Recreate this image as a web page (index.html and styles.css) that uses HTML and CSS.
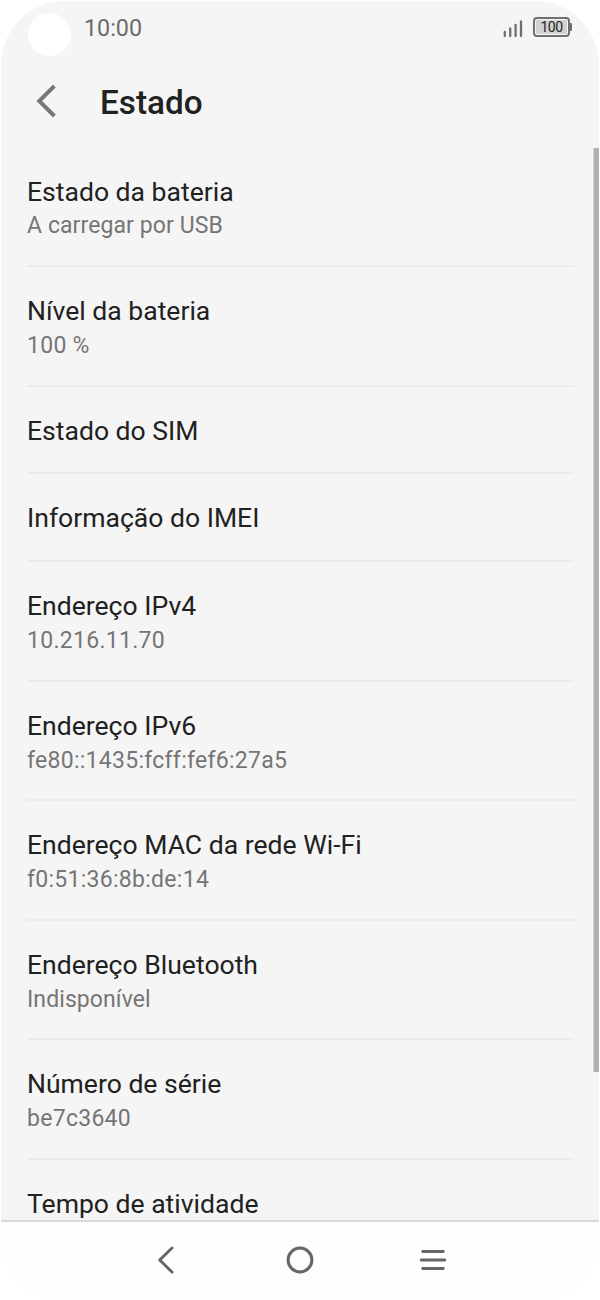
FILE: index.html
```
<!DOCTYPE html>
<html lang="pt">
<head>
<meta charset="utf-8">
<title>Estado</title>
<link rel="stylesheet" href="styles.css">
</head>
<body>
<div class="phone">
  <div class="statusbar">
    <span class="camera"></span>
    <span class="clock">10:00</span>
    <svg class="signal" width="22" height="20" viewBox="0 0 22 20"><path d="M2.8 14v4M8.2 10.5v7.5M13.6 7v11M19 3.3v14.7" stroke="#6f6f6f" stroke-width="2.3" stroke-linecap="round"/></svg>
    <span class="battery"><span class="level">100</span></span>
  </div>
  <header class="header">
    <svg class="back" width="20" height="34" viewBox="0 0 20 34"><path d="M19 2 3.8 17 19 32" transform="translate(-.6 0)" fill="none" stroke="#777" stroke-width="3.9"/></svg>
    <h1 class="heading">Estado</h1>
  </header>
  <main class="list">
    <div class="item"><div class="title">Estado da bateria</div><div class="value">A carregar por USB</div></div>
    <div class="item"><div class="title">Nível da bateria</div><div class="value code">100 %</div></div>
    <div class="item single"><div class="title">Estado do SIM</div></div>
    <div class="item single"><div class="title">Informação do IMEI</div></div>
    <div class="item"><div class="title">Endereço IPv4</div><div class="value code">10.216.11.70</div></div>
    <div class="item"><div class="title">Endereço IPv6</div><div class="value code">fe80::1435:fcff:fef6:27a5</div></div>
    <div class="item"><div class="title">Endereço MAC da rede Wi-Fi</div><div class="value code">f0:51:36:8b:de:14</div></div>
    <div class="item"><div class="title">Endereço Bluetooth</div><div class="value">Indisponível</div></div>
    <div class="item"><div class="title">Número de série</div><div class="value code">be7c3640</div></div>
    <div class="item"><div class="title">Tempo de atividade</div></div>
    <span class="scrollbar"></span>
  </main>
  <nav class="navbar">
    <svg width="30" height="30" viewBox="0 0 30 30"><path d="M21.8 3 9.5 15l12.3 12" transform="translate(-1.8 0)" fill="none" stroke="#666" stroke-width="2.9" stroke-linecap="round" stroke-linejoin="round"/></svg>
    <svg width="30" height="30" viewBox="0 0 30 30"><circle cx="15" cy="15" r="11.9" fill="none" stroke="#666" stroke-width="3"/></svg>
    <svg width="30" height="30" viewBox="0 0 30 30"><path d="M4.7 6.5h20.6M3.2 15h23.6M4.7 23.5h20.6" stroke="#666" stroke-width="2.9" stroke-linecap="round"/></svg>
  </nav>
</div>
</body>
</html>
```
FILE: styles.css
```
body {
  margin: 0;
  background: #fff;
  font-family: Roboto, "Liberation Sans", sans-serif;
  color: #212121;
}
.phone {
  display: flex;
  flex-direction: column;
  box-sizing: border-box;
  width: 598px;
  height: 1299px;
  margin: 0 1px;
  overflow: hidden;
  border-radius: 64px;
  background: #f5f5f5;
  position: relative;
  top: 1px;
}
.statusbar {
  display: flex;
  align-items: flex-start;
  height: 57px;
  padding: 0 26px 0 27px;
}
.camera {
  width: 43px;
  height: 43px;
  margin-top: 12px;
  border-radius: 50%;
  background: #fff;
}
.clock {
  flex: 1;
  margin: 13px 0 0 13px;
  font-size: 23.3px;
  line-height: 28px;
  color: #6b6b6b;
}
.signal {
  margin: 17px 9px 0 0;
}
.battery {
  position: relative;
  box-sizing: border-box;
  width: 37px;
  height: 20px;
  margin: 16px 3px 0 0;
  padding: 1px;
  border: 2px solid #707070;
  border-radius: 4px;
}
.battery::after {
  content: "";
  position: absolute;
  left: 35px;
  top: 4px;
  width: 2px;
  height: 8px;
  border-radius: 0 1px 1px 0;
  background: #707070;
}
.level {
  display: block;
  height: 14px;
  border-radius: 1px;
  background: #d2d2d2;
  color: #222;
  font-size: 14px;
  letter-spacing: -0.5px;
  line-height: 14px;
  text-align: center;
}
.header {
  display: flex;
  align-items: center;
  height: 88px;
  padding-left: 35px;
}
.back {
  margin-top: -2px;
}
.heading {
  margin: 2px 0 0 44px;
  font-size: 33.3px;
  font-weight: 500;
  line-height: 40px;
}
.list {
  position: relative;
  flex: 1;
  min-height: 0;
  overflow: hidden;
  padding: 1.5px 25px 0 26px;
}
.item {
  box-sizing: border-box;
  height: 119.5px;
  padding-top: 27.2px;
  border-bottom: 2px solid #ebebeb;
}
.item.single {
  height: 87.8px;
}
.title {
  font-size: 26.55px;
  line-height: 34px;
}
.value {
  margin-top: 0.8px;
  font-size: 23px;
  line-height: 34px;
  letter-spacing: 0.09px;
  color: #757575;
}
.value.code {
  letter-spacing: 0.28px;
}
.scrollbar {
  position: absolute;
  top: 2px;
  right: 0;
  width: 5px;
  height: 924px;
  border-left: 1px solid #d6d6d6;
  background: #b0b0b0;
}
.navbar {
  display: flex;
  justify-content: center;
  gap: 103px;
  box-sizing: border-box;
  height: 80px;
  padding-top: 23px;
  border-top: 2px solid #dadada;
  background: #fefefe;
}
```
